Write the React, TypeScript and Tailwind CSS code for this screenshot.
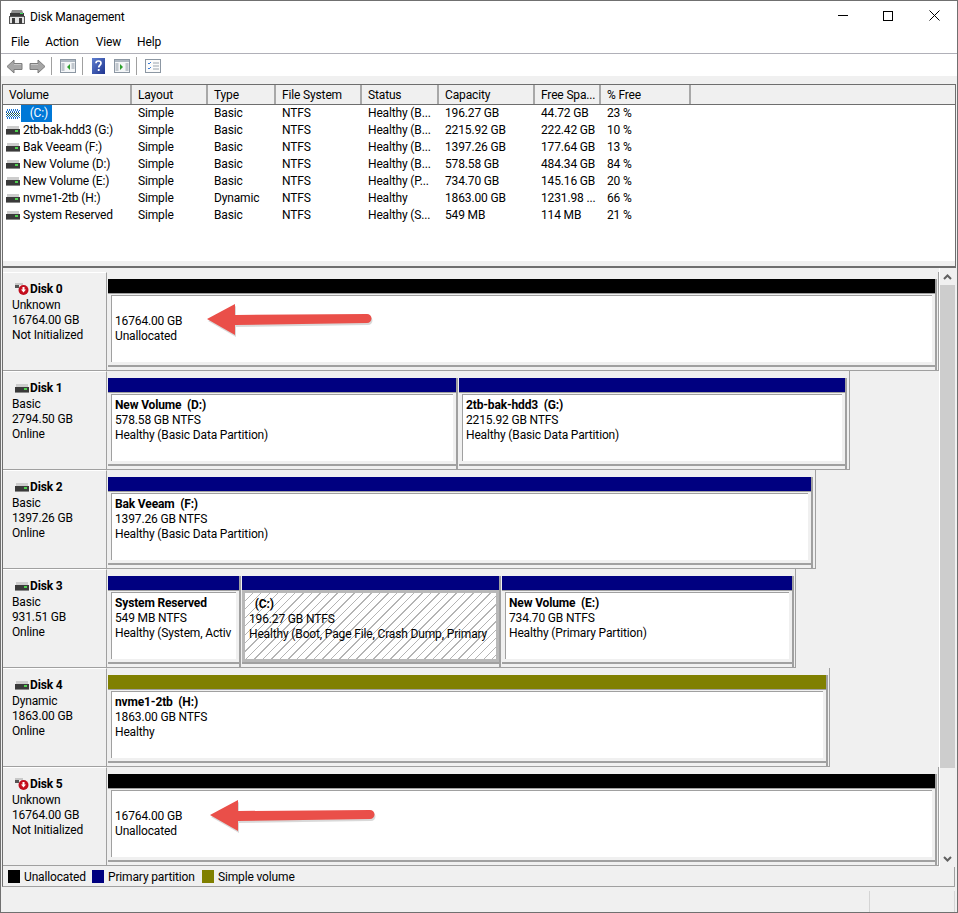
const gridCols = 'grid grid-cols-[129px_76px_68px_86px_77px_96px_66px_90px_1fr]'

const columns = ['Volume', 'Layout', 'Type', 'File System', 'Status', 'Capacity', 'Free Spa...', '% Free']

const volumes = [
  ['  (C:)', 'Simple', 'Basic', 'NTFS', 'Healthy (B...', '196.27 GB', '44.72 GB', '23 %'],
  ['2tb-bak-hdd3 (G:)', 'Simple', 'Basic', 'NTFS', 'Healthy (B...', '2215.92 GB', '222.42 GB', '10 %'],
  ['Bak Veeam (F:)', 'Simple', 'Basic', 'NTFS', 'Healthy (B...', '1397.26 GB', '177.64 GB', '13 %'],
  ['New Volume (D:)', 'Simple', 'Basic', 'NTFS', 'Healthy (B...', '578.58 GB', '484.34 GB', '84 %'],
  ['New Volume (E:)', 'Simple', 'Basic', 'NTFS', 'Healthy (P...', '734.70 GB', '145.16 GB', '20 %'],
  ['nvme1-2tb (H:)', 'Simple', 'Dynamic', 'NTFS', 'Healthy', '1863.00 GB', '1231.98 ...', '66 %'],
  ['System Reserved', 'Simple', 'Basic', 'NTFS', 'Healthy (S...', '549 MB', '114 MB', '21 %'],
]

function DriveIcon({ hatched }: { hatched?: boolean }) {
  if (hatched) {
    return (
      <svg width="14" height="10" viewBox="0 0 14 10" className="shrink-0">
        <path d="M1 .5h12M0 2.500h14M0 7.500h14M1 9.500h12" stroke="#1a73d0" strokeDasharray="1 1" />
        <path d="M0 1.500h14M0 8.500h14" stroke="#1a73d0" strokeDasharray="1 1" strokeDashoffset="1" />
        <path d="M0 3.500h14M0 5.500h14" stroke="#0f4f8f" strokeDasharray="1 1" />
        <path d="M0 4.500h14M0 6.500h14" stroke="#12664f" strokeDasharray="1 1" strokeDashoffset="1" />
      </svg>
    )
  }
  return (
    <svg width="14" height="9" viewBox="0 0 14 9" className="shrink-0">
      <rect x="1" y="0" width="12" height="3" fill="#cdcdcd" />
      <rect x="0" y="3" width="14" height="5" fill="#3a3a3a" />
      <rect x="9" y="4" width="3" height="2" fill="#4fd04f" />
      <rect x="0" y="8" width="14" height="1" fill="#8a8a8a" />
    </svg>
  )
}

function UnknownDiskIcon() {
  return (
    <svg width="14" height="13" viewBox="0 0 14 13" className="shrink-0">
      <rect x="0" y="0" width="8" height="2" fill="#c8c8c8" />
      <rect x="0" y="2" width="4" height="3" fill="#555" />
      <circle cx="8.500" cy="7" r="5" fill="#bf0d1e" />
      <circle cx="8.500" cy="7" r="3.500" fill="#c8101f" />
      <path d="M6 6.500h5L8.500 9.500z" fill="#fff" />
      <rect x="7.500" y="4" width="2" height="3" fill="#fff" />
    </svg>
  )
}

function TitleIcon() {
  return (
    <svg width="16" height="15" viewBox="0 0 16 15">
      <path d="M3 0h10l2 5H1z" fill="#8d8d8d" />
      <rect x="1" y="3" width="14" height="3" fill="#3a3a3a" />
      <rect x="11" y="3" width="3" height="1" fill="#3fdf5f" />
      <rect x="0.500" y="6.500" width="15" height="7" fill="#e4e4e4" stroke="#555" />
      <rect x="3" y="8" width="3" height="6" fill="#3c3c3c" />
      <rect x="10" y="8" width="3" height="6" fill="#3c3c3c" />
    </svg>
  )
}

function NavArrow({ flip }: { flip?: boolean }) {
  return (
    <svg width="17" height="15" viewBox="0 0 17 15" className={flip ? '-scale-x-100' : ''}>
      <path d="M8 1 1 7.500 8 14v-3.500h8v-6H8z" fill="#a6a6a6" stroke="#7d7d7d" />
      <path d="M8 5.500h7" stroke="#c8c8c8" />
    </svg>
  )
}

function PaneIcon({ kind }: { kind: 'left' | 'right' }) {
  return (
    <svg width="16" height="14" viewBox="0 0 16 14">
      <rect x="0.5" y="0.5" width="15" height="13" fill="#f4f6f8" stroke="#8c97a3" />
      <rect x="1" y="1" width="14" height="2" fill="#aeb8c2" />
      <path d={kind === 'left' ? 'M1.5 5h3M1.5 7h3M1.5 9h3M1.5 11h3M11.5 5h3M11.5 7h3M11.5 9h3' : 'M1.5 5h3M1.5 7h3M1.5 9h3M1.5 11h3M11.5 5h3M11.5 7h3M11.5 9h3M11.5 11h3'} stroke="#8c97a3" />
      <path d={kind === 'left' ? 'M10 5v6L7 8z' : 'M6 5v6l3-3z'} fill="#2ca02c" />
    </svg>
  )
}

function HelpIcon() {
  return (
    <svg width="14" height="16" viewBox="0 0 14 16">
      <defs>
        <linearGradient id="help-fill" x1="0" y1="0" x2="1" y2="1">
          <stop offset="0" stopColor="#5f7fd0" />
          <stop offset="1" stopColor="#1f3590" />
        </linearGradient>
      </defs>
      <rect x="0" y="0" width="13" height="16" fill="url(#help-fill)" />
      <path d="M4 5.200C4 3.600 5.200 3 6.500 3S9 3.800 9 5.200C9 7 6.700 7.200 6.700 9.500" fill="none" stroke="#fff" strokeWidth="1.700" />
      <rect x="5.800" y="11" width="1.800" height="2" fill="#fff" />
    </svg>
  )
}

function ChecklistIcon() {
  return (
    <svg width="16" height="14" viewBox="0 0 16 14">
      <rect x="0.5" y="0.5" width="15" height="13" fill="#fbfbfb" stroke="#8c97a3" />
      <path d="M3 4l1 1 2-2M3 9l1 1 2-2" fill="none" stroke="#3a7bd5" />
      <path d="M8 4h6M8 7h6M8 10h6" stroke="#9aa3ad" />
    </svg>
  )
}

function RedArrow({ className }: { className: string }) {
  return (
    <svg width="172" height="38" viewBox="0 0 172 38" className={className}>
      <path d="M2 17 30 2v11l132-1a4 4 0 0 1 0 9L30 23v10z" fill="#000" fillOpacity="0.15" transform="translate(1 2)" />
      <path d="M2 17 30 2v11l132-1a4 4 0 0 1 0 9L30 23v10z" fill="#ea4f49" />
    </svg>
  )
}

type Part = {
  width: string
  color: string
  lines: string[]
  hatched?: boolean
  arrow?: string
}

type Disk = {
  name: string
  info: string[]
  unknown?: boolean
  rowWidth: string
  parts: Part[]
}

const disks: Disk[] = [
  {
    name: 'Disk 0',
    info: ['Unknown', '16764.00 GB', 'Not Initialized'],
    unknown: true,
    rowWidth: 'w-[936px]',
    parts: [{ width: 'w-[829px]', color: 'bg-black', lines: ['', '16764.00 GB', 'Unallocated'], arrow: 'left-[93px] top-[6px]' }],
  },
  {
    name: 'Disk 1',
    info: ['Basic', '2794.50 GB', 'Online'],
    rowWidth: 'w-[847px]',
    parts: [
      { width: 'w-[350px]', color: 'bg-[#000080]', lines: ['New Volume  (D:)', '578.58 GB NTFS', 'Healthy (Basic Data Partition)'] },
      { width: 'w-[388px]', color: 'bg-[#000080]', lines: ['2tb-bak-hdd3  (G:)', '2215.92 GB NTFS', 'Healthy (Basic Data Partition)'] },
    ],
  },
  {
    name: 'Disk 2',
    info: ['Basic', '1397.26 GB', 'Online'],
    rowWidth: 'w-[813px]',
    parts: [{ width: 'w-[705px]', color: 'bg-[#000080]', lines: ['Bak Veeam  (F:)', '1397.26 GB NTFS', 'Healthy (Basic Data Partition)'] }],
  },
  {
    name: 'Disk 3',
    info: ['Basic', '931.51 GB', 'Online'],
    rowWidth: 'w-[793px]',
    parts: [
      { width: 'w-[133px]', color: 'bg-[#000080]', lines: ['System Reserved', '549 MB NTFS', 'Healthy (System, Activ'] },
      { width: 'w-[259px]', color: 'bg-[#000080]', lines: ['  (C:)', '196.27 GB NTFS', 'Healthy (Boot, Page File, Crash Dump, Primary'], hatched: true },
      { width: 'w-[292px]', color: 'bg-[#000080]', lines: ['New Volume  (E:)', '734.70 GB NTFS', 'Healthy (Primary Partition)'] },
    ],
  },
  {
    name: 'Disk 4',
    info: ['Dynamic', '1863.00 GB', 'Online'],
    rowWidth: 'w-[827px]',
    parts: [{ width: 'w-[720px]', color: 'bg-[#808000]', lines: ['nvme1-2tb  (H:)', '1863.00 GB NTFS', 'Healthy'] }],
  },
  {
    name: 'Disk 5',
    info: ['Unknown', '16764.00 GB', 'Not Initialized'],
    unknown: true,
    rowWidth: 'w-[936px]',
    parts: [{ width: 'w-[829px]', color: 'bg-black', lines: ['', '16764.00 GB', 'Unallocated'], arrow: 'left-[96px] top-[7px]' }],
  },
]

function Partition({ part }: { part: Part }) {
  return (
    <div className={`${part.width} shrink-0 border-r-2 border-[#a0a0a0]`}>
      <div className={`h-[14px] ${part.color}`} />
      <div className={part.hatched
        ? 'h-[74px] border-b-2 border-[#a0a0a0] bg-[#b8b8b8] p-[3px]'
        : 'h-[74px] border-t border-b-2 border-[#a0a0a0] bg-[#f0f0f0] pt-[1px] pl-[3px] pr-[3px] pb-[3px]'}>
        <div className={part.hatched
          ? 'relative h-full overflow-hidden whitespace-pre bg-[repeating-linear-gradient(135deg,#fff_0,#fff_5px,#b4b4b4_5px,#b4b4b4_6px)] pt-[4px] pl-[4px] leading-[15px]'
          : 'relative h-full overflow-hidden whitespace-pre border-t border-l border-[#a0a0a0] bg-white pt-[3px] pl-[3px] leading-[15px]'}>
          <div className="h-[15px] font-bold">{part.lines[0]}</div>
          <div>{part.lines[1]}</div>
          <div>{part.lines[2]}</div>
          {part.arrow && <RedArrow className={`absolute ${part.arrow}`} />}
        </div>
      </div>
    </div>
  )
}

function DiskRow({ disk }: { disk: Disk }) {
  return (
    <div className={`flex h-[99px] ${disk.rowWidth} border-b border-r border-[#a0a0a0]`}>
      <div className="h-full w-[104px] shrink-0 border-t border-r border-t-white border-r-[#a0a0a0] pt-[1px] pl-[9px] leading-[15px]">
        <div className="mt-[7px] flex h-[16px] items-center gap-[1px] pl-[3px] font-bold">
          {disk.unknown ? <UnknownDiskIcon /> : <DriveIcon />}
          <span>{disk.name}</span>
        </div>
        <div className="mt-[1px]">
          {disk.info.map(line => <div key={line}>{line}</div>)}
        </div>
      </div>
      <div className="flex gap-[1px] pl-[1px] pt-[7px]">
        {disk.parts.map(part => <Partition key={part.lines[1]} part={part} />)}
      </div>
    </div>
  )
}

export default function App() {
  return (
    <div className="flex h-[913px] w-[958px] flex-col overflow-hidden border border-[#707070] bg-white font-['Roboto',sans-serif] text-[12px] tracking-[-0.15px] text-black">
      <div className="flex h-[30px] shrink-0 items-center pt-[2px]">
        <div className="ml-[8px]"><TitleIcon /></div>
        <div className="ml-[5px]">Disk Management</div>
        <div className="-mt-[3px] ml-auto flex items-center">
          <div className="h-[1px] w-[10px] bg-black" />
          <div className="ml-[35px] h-[10px] w-[10px] border border-black" />
          <svg width="11" height="11" viewBox="0 0 11 11" className="ml-[36px] mr-[17px]">
            <path d="M.5.5l10 10M10.500.5l-10 10" stroke="#000" />
          </svg>
        </div>
      </div>
      <div className="flex h-[22px] shrink-0 items-center pl-[10px]">
        <span>File</span>
        <span className="ml-[16px]">Action</span>
        <span className="ml-[17px]">View</span>
        <span className="ml-[16px]">Help</span>
      </div>
      <div className="h-[1px] shrink-0 bg-[#b0b0b8]" />
      <div className="flex h-[22px] shrink-0 items-center pt-[2px] pl-[5px]">
        <NavArrow />
        <div className="ml-[6px]"><NavArrow flip /></div>
        <div className="ml-[5px] h-[18px] w-[1px] bg-[#a0a0a0]" />
        <div className="ml-[8px]"><PaneIcon kind="left" /></div>
        <div className="ml-[6px] h-[18px] w-[1px] bg-[#a0a0a0]" />
        <div className="ml-[9px]"><HelpIcon /></div>
        <div className="ml-[8px]"><PaneIcon kind="right" /></div>
        <div className="ml-[6px] h-[18px] w-[1px] bg-[#a0a0a0]" />
        <div className="ml-[8px]"><ChecklistIcon /></div>
      </div>

      <div className="flex flex-1 flex-col bg-[#f0f0f0] pt-[8px] pl-[1px] pr-[1px]">
        <div className="h-[184px] shrink-0 border-t border-l border-r border-b-2 border-[#6e6e6e]">
          <div className="h-[176px] bg-white">
            <div className={`${gridCols} h-[20px] border-b border-[#6e6e6e] bg-[#f0f0f0]`}>
              {columns.map(col => (
                <div key={col} className="border-r-2 border-[#a8a8a8] pl-[6px] pt-[1px] leading-[18px]">{col}</div>
              ))}
            </div>
            {volumes.map((row, i) => (
              <div key={row[0]} className={`${gridCols} h-[17px] leading-[17px]`}>
                <div className="flex items-center whitespace-pre pl-[3px]">
                  <DriveIcon hatched={i === 0} />
                  {i === 0
                    ? <span className="ml-[1px] bg-[#0078d7] pl-[3px] pr-[4px] text-white">{row[0]}</span>
                    : <span className="ml-[3px]">{row[0]}</span>}
                </div>
                {row.slice(1).map((cell, j) => (
                  <div key={j} className="pl-[6px]">{cell}</div>
                ))}
              </div>
            ))}
          </div>
        </div>

        <div className="flex h-[599px] shrink-0 border-l border-[#6e6e6e]">
          <div className="w-[936px] pt-[4px]">
            {disks.map(disk => <DiskRow key={disk.name} disk={disk} />)}
          </div>
          <div className="flex w-[16px] flex-col border-l border-white">
            <div className="flex h-[17px] items-center justify-center">
              <svg width="9" height="6" viewBox="0 0 9 6"><path d="M1 5l3.500-3.500L8 5" fill="none" stroke="#606060" strokeWidth="2" /></svg>
            </div>
            <div className="h-[483px] bg-[#cdcdcd]" />
            <div className="mt-auto flex h-[17px] items-center justify-center">
              <svg width="9" height="6" viewBox="0 0 9 6"><path d="M1 1l3.500 3.500L8 1" fill="none" stroke="#606060" strokeWidth="2" /></svg>
            </div>
          </div>
        </div>

        <div className="mr-[1px] flex h-[20px] shrink-0 items-center border-l border-r border-b border-l-[#6e6e6e] border-r-[#a0a0a0] border-b-[#a0a0a0] pl-[5px]">
          <div className="h-[13px] w-[12px] bg-black" />
          <span className="ml-[4px] w-[62px]">Unallocated</span>
          <div className="ml-[6px] h-[13px] w-[12px] bg-[#000080]" />
          <span className="ml-[4px] w-[88px]">Primary partition</span>
          <div className="ml-[6px] h-[13px] w-[12px] bg-[#808000]" />
          <span className="ml-[4px]">Simple volume</span>
        </div>

        <div className="flex flex-1 justify-end pt-[4px] pr-[1px]">
          <div className="w-[86px] border-l border-r border-[#d4d4d4]" />
        </div>
      </div>
    </div>
  )
}
